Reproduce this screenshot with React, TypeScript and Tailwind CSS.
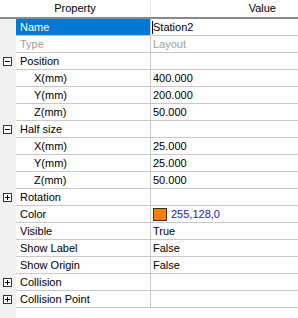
import type { ReactNode } from "react";

type Row = {
  label: string;
  value?: ReactNode;
  indent?: boolean;
  box?: "minus" | "plus";
  muted?: boolean;
  selected?: boolean;
};

const ExpandBox = ({ kind }: { kind: "minus" | "plus" }) => (
  <svg width="9" height="9" viewBox="0 0 9 9" className="block">
    <rect x="0.5" y="0.5" width="8" height="8" fill="#fff" stroke="#333" />
    <line x1="2" y1="4.5" x2="7" y2="4.5" stroke="#000" />
    {kind === "plus" && <line x1="4.5" y1="2" x2="4.5" y2="7" stroke="#000" />}
  </svg>
);

const rows: Row[] = [
  { label: "Name", value: "Station2", selected: true },
  { label: "Type", value: "Layout", muted: true },
  { label: "Position", box: "minus" },
  { label: "X(mm)", value: "400.000", indent: true },
  { label: "Y(mm)", value: "200.000", indent: true },
  { label: "Z(mm)", value: "50.000", indent: true },
  { label: "Half size", box: "minus" },
  { label: "X(mm)", value: "25.000", indent: true },
  { label: "Y(mm)", value: "25.000", indent: true },
  { label: "Z(mm)", value: "50.000", indent: true },
  { label: "Rotation", box: "plus" },
  {
    label: "Color",
    value: (
      <span className="flex items-center gap-[4px]">
        <span className="block h-[13px] w-[14px] border border-[#333] bg-[#ff8000]" />
        <span className="text-[#1a1aa6]">255,128,0</span>
      </span>
    ),
  },
  { label: "Visible", value: "True" },
  { label: "Show Label", value: "False" },
  { label: "Show Origin", value: "False" },
  { label: "Collision", box: "plus" },
  { label: "Collision Point", box: "plus" },
];

export default function App() {
  return (
    <div
      className="flex h-[318px] w-[298px] flex-col overflow-hidden bg-white text-[11px] leading-none text-black"
      style={{ fontFamily: '"Liberation Sans", Arial, sans-serif' }}
    >
      {/* Header */}
      <div className="flex h-[19px] shrink-0 border-b-2 border-[#8a8a8a]">
        <div className="flex w-[151px] items-center justify-center border-r border-[#e3e3e3]">Property</div>
        <div className="flex flex-1 items-center justify-end pr-[22px]">Value</div>
      </div>

      {rows.map((r, i) => (
        <div key={i} className="flex h-[17px] shrink-0">
          <div className="flex w-[16px] shrink-0 items-center justify-center bg-[#f0f0f0] pr-[1px]">
            {r.box && <ExpandBox kind={r.box} />}
          </div>
          <div
            className={`flex w-[134px] shrink-0 items-center border-b border-[#c8c8c8] ${r.indent ? "pl-[18px]" : "pl-[4px]"} ${
              r.selected ? "bg-[#0078d7] text-white" : ""
            } ${r.muted ? "text-[#a0a0a0]" : ""}`}
          >
            {r.label}
          </div>
          <div
            className={`flex flex-1 items-center border-b border-l border-[#c8c8c8] ${r.selected ? "pl-[1px]" : "pl-[2px]"} ${
              r.muted ? "text-[#a0a0a0]" : ""
            }`}
          >
            {r.selected ? <span className="h-[13px] border-l border-black leading-[13px]">{r.value}</span> : r.value}
          </div>
        </div>
      ))}

      {/* Remaining empty space */}
      <div className="flex flex-1">
        <div className="w-[16px] bg-[#f0f0f0]" />
        <div className="flex-1" />
      </div>
    </div>
  );
}
